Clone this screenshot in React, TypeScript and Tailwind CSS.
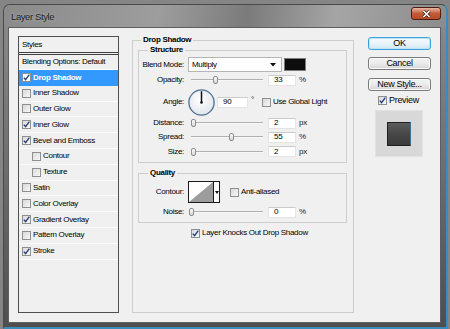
import React from 'react';

function Check({ checked, white }: { checked?: boolean; white?: boolean }) {
  return (
    <span
      className={
        white
          ? 'flex h-[9px] w-[9px] shrink-0 items-center justify-center border border-[#8e8f8f] bg-white'
          : 'flex h-[9px] w-[9px] shrink-0 items-center justify-center border border-[#8e8f8f] bg-gradient-to-br from-[#d9d9d9] to-[#f8f8f8]'
      }
    >
      {checked && (
        <svg width="7" height="7" viewBox="0 0 7 7">
          <path d="M0.8 3.6 L2.6 5.7 L6.3 0.7" stroke="#1f3a78" strokeWidth="1.3" fill="none" />
        </svg>
      )}
    </span>
  );
}

function Slider({ pos }: { pos: number }) {
  return (
    <div className="relative ml-[5px] h-[10px] w-[74px] shrink-0">
      <div className="absolute left-[2px] right-0 top-[4px] h-[2px] border-t border-[#b0b0b0] bg-[#f7f7f7]" />
      <div
        className="absolute top-[1px] h-[8px] w-[5px] rounded-[2px] border border-[#8c8c8c] bg-gradient-to-b from-white to-[#d6d6d6]"
        style={{ left: pos - 2 }}
      />
    </div>
  );
}

function Num({ v, w }: { v: string; w?: string }) {
  return (
    <div
      className={
        (w ?? 'w-[28px] ml-[5px]') +
        ' flex h-[11px] shrink-0 items-center border border-[#e4e4e4] border-t-[#cbcbcb] bg-white pl-[5px] text-[8px] leading-none'
      }
    >
      {v}
    </div>
  );
}

function Label({ t }: { t: string }) {
  return <div className="w-[43px] shrink-0 whitespace-nowrap text-right">{t}</div>;
}

function SliderRow({ label, pos, v, unit, h }: { label: string; pos: number; v: string; unit: string; h: string }) {
  return (
    <div className={h + ' flex items-center pl-[2px]'}>
      <Label t={label} />
      <Slider pos={pos} />
      <Num v={v} />
      <span className="ml-[3px] text-[#222]">{unit}</span>
    </div>
  );
}

const styleItems: { name: string; checked?: boolean; selected?: boolean; indent?: boolean }[] = [
  { name: 'Drop Shadow', checked: true, selected: true },
  { name: 'Inner Shadow' },
  { name: 'Outer Glow' },
  { name: 'Inner Glow', checked: true },
  { name: 'Bevel and Emboss', checked: true },
  { name: 'Contour', indent: true },
  { name: 'Texture', indent: true },
  { name: 'Satin' },
  { name: 'Color Overlay' },
  { name: 'Gradient Overlay', checked: true },
  { name: 'Pattern Overlay' },
  { name: 'Stroke', checked: true },
];

function Button({ children, primary }: { children: React.ReactNode; primary?: boolean }) {
  return (
    <div
      className={
        primary
          ? 'flex h-[13px] w-[63px] items-center justify-center rounded-[3px] border border-[#3ca3da] bg-gradient-to-b from-[#f6fbfe] via-[#e9f4fa] to-[#cfe7f3] text-[9px] leading-none shadow-[inset_0_0_0_1px_#bfe3f5]'
          : 'flex h-[13px] w-[63px] items-center justify-center rounded-[3px] border border-[#7a7a7a] bg-gradient-to-b from-[#f4f4f4] via-[#ebebeb] to-[#d5d5d5] text-[9px] leading-none shadow-[inset_0_0_0_1px_#fbfbfb]'
      }
    >
      {children}
    </div>
  );
}

export default function App() {
  return (
    <div className="h-[329px] w-[450px] overflow-hidden bg-[#858585] pl-[3px] pt-[4px] font-['Liberation_Sans',Arial,sans-serif] text-[8px] tracking-[-0.3px] text-black">
      <div className="flex h-[325px] w-[445px] flex-col rounded-t-[7px] border-l border-t border-[#4a4a4a] border-b-2 border-r-2 border-b-[#3a8dbb] border-r-[#3a8dbb] bg-gradient-to-b from-[#8c8c8c] via-[#6e6e6e] to-[#4e4e4e]">
        {/* title bar */}
        <div className="flex h-[22px] shrink-0 items-start justify-between rounded-t-[6px] bg-[linear-gradient(100deg,#8a8a8a_0%,#9d9d9d_35%,#7b7b7b_55%,#a5a5a5_75%,#8c8c8c_100%)]">
          <div className="mt-[6px] pl-[7px] text-[9.5px] leading-[11px] tracking-[-0.4px] text-[#1a1a1a] [text-shadow:0_0_3px_rgba(255,255,255,0.45)]">
            Layer Style
          </div>
          <div className="mr-[5px] mt-[2px] flex h-[13px] w-[30px] items-center justify-center rounded-[3px] border border-[#4d1d10] bg-gradient-to-b from-[#e6b7a3] via-[#c25a37] to-[#b94b28]">
            <svg width="9" height="8" viewBox="0 0 9 8">
              <path d="M1.5 1 L7.5 7 M7.5 1 L1.5 7" stroke="#3a1a10" strokeWidth="3" />
              <path d="M1.5 1 L7.5 7 M7.5 1 L1.5 7" stroke="#fff" strokeWidth="1.6" />
            </svg>
          </div>
        </div>
        {/* client */}
        <div className="pb-[4px] pl-[4px] pr-[5px]">
          <div className="flex h-[296px] w-[433px] items-start border border-[#5e5e5e] bg-[#f0f0f0] pl-[9px]">
            {/* styles list */}
            <div className="mt-[8px] h-[277px] w-[101px] shrink-0 border border-[#4f4f4f] bg-[#f0f0f0]">
              <div className="flex h-[18px] items-center border-b-[3px] border-double border-[#3f3f3f] pl-[3px]">Styles</div>
              <div className="flex h-[15px] items-center border-b border-white pl-[3px]">Blending Options: Default</div>
              {styleItems.map((s) => (
                <div
                  key={s.name}
                  className={
                    (s.selected ? 'bg-[#3399ff] font-bold text-white ' : 'border-b border-[#fbfbfb] ') +
                    (s.indent ? 'pl-[13px] ' : 'pl-[3px] ') +
                    'flex h-[15.8px] items-center gap-[2px] whitespace-nowrap'
                  }
                >
                  <Check checked={s.checked} white={s.selected} />
                  <span>{s.name}</span>
                </div>
              ))}
            </div>

            {/* drop shadow group */}
            <fieldset className="ml-[13px] mt-[7px] h-[278px] w-[222px] shrink-0 border border-[#cdcdcd] pl-[5px] pr-[6px]">
              <legend className="ml-[3px] px-[2px] text-[8px] font-bold leading-[10px]">Drop Shadow</legend>
              <fieldset className="border border-[#cdcdcd] pb-[3px]">
                <legend className="ml-[9px] px-[2px] font-bold leading-[10px]">Structure</legend>
                <div className="mt-[2px] flex h-[15px] items-center pl-[2px]">
                  <Label t="Blend Mode:" />
                  <div className="ml-[4px] flex h-[15px] w-[94px] shrink-0 items-center justify-between border border-[#b5b5b5] bg-white pl-[3px] pr-[5px]">
                    <span>Multiply</span>
                    <svg width="6" height="4" viewBox="0 0 6 4">
                      <path d="M0 0 H6 L3 3.5 Z" fill="#111" />
                    </svg>
                  </div>
                  <div className="ml-[2px] h-[13px] w-[22px] shrink-0 border border-[#7a7a7a] bg-[#0d0d0d]" />
                </div>
                <SliderRow label="Opacity:" pos={26} v="33" unit="%" h="h-[16px]" />
                <div className="flex h-[28px] items-center pl-[2px]">
                  <Label t="Angle:" />
                  <svg className="ml-[4px] shrink-0" width="27" height="27" viewBox="0 0 27 27">
                    <defs>
                      <radialGradient id="dial" cx="45%" cy="40%" r="65%">
                        <stop offset="0" stopColor="#ffffff" />
                        <stop offset="1" stopColor="#dfe4ea" />
                      </radialGradient>
                    </defs>
                    <circle cx="13.5" cy="13.5" r="12.6" fill="url(#dial)" stroke="#4d6f93" strokeWidth="1.3" />
                    <line x1="13.5" y1="13.5" x2="13.5" y2="2.2" stroke="#111" strokeWidth="1.5" />
                    <circle cx="13.5" cy="13.5" r="1.3" fill="#111" />
                  </svg>
                  <Num v="90" w="w-[31px] ml-[2px]" />
                  <span className="ml-[3px] -mt-[4px] text-[#222]">°</span>
                  <div className="ml-[8px] flex items-center gap-[2px]">
                    <Check />
                    <span className="whitespace-nowrap">Use Global Light</span>
                  </div>
                </div>
                <SliderRow label="Distance:" pos={4} v="2" unit="px" h="h-[14px]" />
                <SliderRow label="Spread:" pos={42} v="55" unit="%" h="h-[14px]" />
                <SliderRow label="Size:" pos={4} v="2" unit="px" h="h-[15px]" />
              </fieldset>

              <fieldset className="mt-[5px] border border-[#cdcdcd] pb-[3px]">
                <legend className="ml-[9px] px-[2px] font-bold leading-[10px]">Quality</legend>
                <div className="mt-[3px] flex h-[22px] items-center pl-[2px]">
                  <Label t="Contour:" />
                  <div className="ml-[4px] flex h-[22px] shrink-0 border border-[#1a1a1a] bg-white">
                    <svg width="24" height="20" viewBox="0 0 24 20" className="block">
                      <polygon points="0,20 24,0 24,20" fill="#9c9c9c" />
                    </svg>
                    <div className="flex w-[6px] items-center justify-center border-l border-[#1a1a1a] bg-white">
                      <svg width="4" height="3" viewBox="0 0 4 3">
                        <path d="M0 0 H4 L2 3 Z" fill="#111" />
                      </svg>
                    </div>
                  </div>
                  <div className="ml-[10px] flex items-center gap-[2px]">
                    <Check />
                    <span className="whitespace-nowrap">Anti-aliased</span>
                  </div>
                </div>
                <div className="mt-[2px]">
                  <SliderRow label="Noise:" pos={2} v="0" unit="%" h="h-[14px]" />
                </div>
              </fieldset>

              <div className="mt-[5px] flex h-[10px] items-center gap-[2px] pl-[53px]">
                <Check checked />
                <span className="whitespace-nowrap">Layer Knocks Out Drop Shadow</span>
              </div>
            </fieldset>

            {/* buttons */}
            <div className="ml-[14px] mt-[9px] flex w-[63px] shrink-0 flex-col">
              <Button primary>OK</Button>
              <div className="mt-[7px]">
                <Button>Cancel</Button>
              </div>
              <div className="mt-[8px]">
                <Button>New Style...</Button>
              </div>
              <div className="ml-[10px] mt-[5px] flex h-[9px] items-center gap-[2px] text-[9px]">
                <Check checked />
                <span>Preview</span>
              </div>
              <div className="ml-[7px] mt-[5px] flex h-[47px] w-[48px] items-center justify-center border border-[#e2e2e2] bg-[#d8d8d8]">
                <div className="h-[24px] w-[24px] rounded-[1px] border border-[#1e1e1e] border-r-[#3f6f8f] bg-gradient-to-b from-[#5c5c5c] via-[#474747] to-[#3a3a3a]" />
              </div>
            </div>
          </div>
        </div>
      </div>
    </div>
  );
}
